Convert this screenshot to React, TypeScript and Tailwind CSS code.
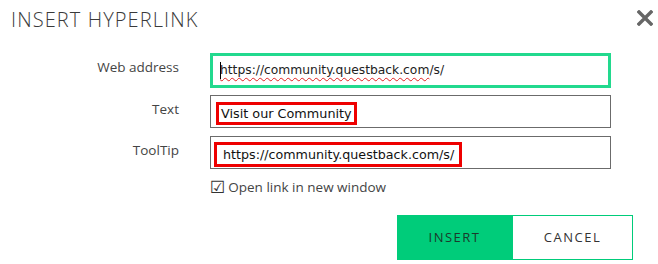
import React from "react";

const labelFont = { fontFamily: '"Open Sans", "Liberation Sans", sans-serif' };
const fieldFont = { fontFamily: '"DejaVu Sans", Verdana, sans-serif' };

function Row({ label, children }: { label: string; children: React.ReactNode }) {
  return (
    <div className="flex items-start">
      <div className="w-[180px] shrink-0 pt-[4px] pr-[1px] text-right text-[13.5px] text-[#444]" style={labelFont}>
        {label}
      </div>
      <div className="ml-[30px] w-[401px]">{children}</div>
    </div>
  );
}

export default function App() {
  return (
    <div className="relative h-[264px] w-[658px] bg-white">
      <div className="flex items-start justify-between pl-[11px] pr-[5px] pt-[5px]">
        <h1 className="text-[20px] font-light tracking-[1.1px] text-[#3a3a3a]" style={labelFont}>
          INSERT HYPERLINK
        </h1>
        <button className="mt-[4px] flex h-[17px] w-[17px] items-center justify-center text-[#666]" aria-label="Close">
          <svg width="16" height="16" viewBox="0 0 16 16">
            <path d="M2 2 L14 14 M14 2 L2 14" stroke="currentColor" strokeWidth="3.4" strokeLinecap="square" />
          </svg>
        </button>
      </div>

      <div className="mt-[18px] flex flex-col gap-[7px]">
        <Row label="Web address">
          <div className="flex h-[35px] items-center border-[3px] border-[#22d98e] pl-[7px] text-[12.3px] text-[#222]" style={fieldFont}>
            <span className="mr-[-1px] inline-block h-[17px] w-px bg-black" />
            <span className="underline decoration-[#e02020] decoration-wavy decoration-1 underline-offset-[3px]">
              https://community.questback.com
            </span>
            <span>/s/</span>
          </div>
        </Row>
        <Row label="Text">
          <div className="flex h-[33px] items-start border border-[#6b6b6b] pl-[5px] pt-[6px]">
            <span className="flex h-[23px] items-center border-[3px] border-[#ee0000] px-[2px] text-[12.8px] text-[#111]" style={fieldFont}>
              Visit our Community
            </span>
          </div>
        </Row>
        <div className="mt-[1px]">
          <Row label="ToolTip">
            <div className="flex h-[33px] items-start border border-[#6b6b6b] pl-[3px] pt-[5px]">
              <span className="flex h-[25px] items-center border-[3px] border-[#ee0000] pl-[6px] pr-[5px] text-[12.7px] text-[#111]" style={fieldFont}>
                https://community.questback.com/s/
              </span>
            </div>
          </Row>
        </div>
      </div>

      <div className="ml-[210px] mt-[9px] flex h-[19px] items-center gap-[3px] text-[13.5px] text-[#444]" style={labelFont}>
        <span className="text-[17px] leading-none text-[#333]" style={fieldFont}>☑</span>
        <span>Open link in new window</span>
      </div>

      <div className="ml-[397px] mt-[18px] flex h-[45px]">
        <button className="w-[115px] bg-[#00cc7a] text-[13px] tracking-[1.5px] text-[#1b3a2c]" style={labelFont}>
          INSERT
        </button>
        <button className="w-[121px] border border-[#00cc7a] bg-white text-[13px] tracking-[1.5px] text-[#333]" style={labelFont}>
          CANCEL
        </button>
      </div>
    </div>
  );
}
